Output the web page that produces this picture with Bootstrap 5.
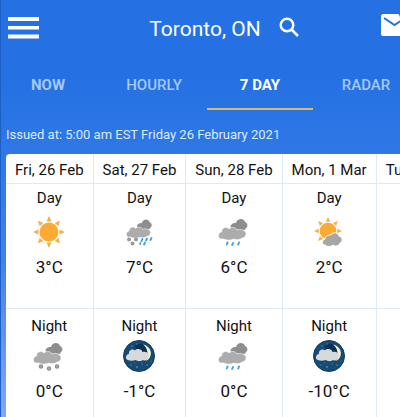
<!DOCTYPE html>
<html lang="en">
<head>
<meta charset="utf-8">
<meta name="viewport" content="width=device-width, initial-scale=1">
<title>Toronto, ON – 7 Day Forecast</title>
<link rel="stylesheet" href="https://cdn.jsdelivr.net/npm/bootstrap@5.3.0/dist/css/bootstrap.min.css">
<style>
body { font-family: Roboto, "Liberation Sans", sans-serif; color: #111; background: #2571e3; }
.app { border-left: 1px solid #1c60c4; background: linear-gradient(#2571e3 0, #2571e3 80px, #3078e6 160px, #4580e6 260px, #86a6ee 100%); }
.top-bar { height: 56px; padding: 0 0 0 7px; }
.icon-btn { line-height: 0; color: #fff; }
.city { font-size: 21px; line-height: 28px; padding-top: 2px; }
.place { padding-left: 31px; }
.tab-strip { margin-left: -6px; height: 54px; }
.tab-strip .nav-link { flex: 0 0 106px; padding: 17px 0 0; font-size: 15px; line-height: 24px; font-weight: 500; text-align: center; color: #a5c8f8; border-radius: 0; border-bottom: 2px solid transparent; }
.tab-strip .nav-link.heavy { font-weight: 700; }
.tab-strip .nav-link.active { color: #fff; font-weight: 700; border-bottom-color: #dcb964; }
.issued { font-size: 13px; line-height: 20px; padding: 15px 0 9px 5px; color: #dcebff; }
.sheet { margin-left: 5px; border-radius: 4px 0 0 0; }
.days { border-collapse: separate; border-spacing: 0; white-space: nowrap; text-align: center; font-size: 15px; line-height: 24px; }
.days th, .days td { border-right: 1px solid #dfeaf7; border-bottom: 1px solid #dfeaf7; vertical-align: top; }
.days th { font-weight: 400; padding: 4px 9px 1px; }
.days td { padding: 2px 8px 29px; }
.days .night td { padding: 5px 8px 30px; }
.days svg { display: block; margin: 6px auto 7px; }
.days .night svg { margin: 2px auto 7px; }
.temp { font-size: 17px; }
</style>
<script src="https://cdn.jsdelivr.net/npm/bootstrap@5.3.0/dist/js/bootstrap.bundle.min.js"></script>
</head>
<body>
<svg width="0" height="0" class="position-absolute" aria-hidden="true">
  <defs>
    <path id="puff" d="M3 23C-.5 22.500 -.5 16.500 3.500 16C3.500 12 8 10 11 13C14 10.500 18 11.500 19 14C23 12.500 28 14.500 28 17.500C28 20.500 26 22 24 22C22 24 18 24 16 23C13 24.500 8 24.500 6 23Z"/>
    <symbol id="clouds" viewBox="0 0 32 32">
      <path fill="#8e8e8e" d="M12.500 11C12.500 8 16 6.500 18 7C19 2 26 1.500 27 6C30 7 30 11 28 12C27 15 23 14.500 21 14C18 14 14 13 12.500 11Z"/>
      <use href="#puff" fill="#acacac" stroke="#fff" stroke-width=".6"/>
    </symbol>
    <symbol id="rain" viewBox="0 0 32 32">
      <use href="#clouds" width="32" height="32"/>
      <g stroke="#4da0e0" stroke-width="2" stroke-linecap="round"><path d="M9.500 26.500L8.700 28.500M15 27L14.200 29M21 26.500L20.200 28.500"/></g>
    </symbol>
    <symbol id="snow" viewBox="0 0 32 32">
      <use href="#clouds" width="32" height="32"/>
      <g fill="#aaa" stroke="#8e8e8e" stroke-width="1.300"><circle cx="8" cy="26.500" r="1.600"/><circle cx="16" cy="28.500" r="1.600"/><circle cx="24" cy="26.500" r="1.600"/></g>
    </symbol>
    <symbol id="mix" viewBox="0 0 32 32">
      <use href="#clouds" x="3" y="1" width="28" height="28"/>
      <g fill="#999"><circle cx="6" cy="23.500" r="2"/><circle cx="13" cy="23.500" r="2"/><circle cx="9.500" cy="27.500" r="2"/></g>
      <g stroke="#3f9bea" stroke-width="1.800" stroke-linecap="round"><path d="M19.500 23L18.500 25M24 22.500L23 24.500M28.500 22L27.500 24M17.500 27L17 28M22 26.500L21 28.500"/></g>
    </symbol>
    <symbol id="sun" viewBox="0 0 32 32">
      <g fill="#f4b04a">
        <g id="rays"><path id="ray" d="M16 0L18.500 5.500H13.500Z"/><use href="#ray" transform="rotate(45 16 16)"/></g>
        <use href="#rays" transform="rotate(90 16 16)"/><use href="#rays" transform="rotate(180 16 16)"/><use href="#rays" transform="rotate(270 16 16)"/>
      </g>
      <circle cx="16" cy="16" r="9.500" fill="#fbab33"/>
    </symbol>
    <symbol id="suncloud" viewBox="0 0 32 32">
      <use href="#sun" x="1" y="1" width="28" height="28"/>
      <path d="M12 29C8 29 9 23.500 12 23C12 19 17 19 18 19C20 15.500 25 16.500 26 20C30 21 30 26 27 27C26 30 22 31 20 29C18 31 14 31 12 29Z" fill="#a6a6a6" stroke="#fff" stroke-width="1"/>
    </symbol>
    <symbol id="moon" viewBox="0 0 32 32">
      <circle cx="16" cy="16" r="15.500" fill="#174b74" stroke="#123c62"/>
      <path d="M12 5.500C15 3 20 3.500 22 6C24 9 25 12 24 15L13 11Z" fill="#0c3050"/>
      <path d="M20 4.500C30 7 30 18 23 21C26 16 25 8 20 4.500Z" fill="#f5f1c8"/>
      <path d="M5 20C1.500 19 3 14 6 14C5 10 10 8 12 10.500C14 8 19 9 19.500 12C24 10.500 27 14 25 17C25 20 22 21.500 20 20C17 22 14 21 13 20C10 21 7 21 5 20Z" fill="#d8d9da"/>
      <g fill="#5588aa"><circle cx="9" cy="6" r=".7"/><circle cx="14" cy="4" r=".7"/><circle cx="8" cy="25" r=".7"/><circle cx="14" cy="27" r=".9"/><circle cx="19" cy="24" r=".7"/><circle cx="24" cy="25" r=".8"/><circle cx="12" cy="23" r=".6"/><circle cx="28" cy="21" r=".6"/></g>
    </symbol>
  </defs>
</svg>
<div class="app d-flex flex-column vh-100 overflow-hidden">
  <header class="top-bar d-flex flex-shrink-0 align-items-center justify-content-between">
    <button type="button" class="icon-btn btn p-0 border-0" aria-label="Menu"><svg width="31" height="22" viewBox="0 0 31 22" fill="currentColor"><path d="M0 0H31V4H0ZM0 9H31V12.500H0ZM0 17.500H31V21.500H0Z"/></svg></button>
    <div class="place d-flex align-items-center gap-3">
      <h1 class="city fw-normal text-white mb-0">Toronto, ON</h1>
      <button type="button" class="icon-btn btn p-0 border-0" aria-label="Search"><svg width="24" height="24" viewBox="0 0 24 24" fill="none" stroke="currentColor" stroke-width="2.500"><circle cx="10" cy="9" r="6.300"/><path d="M14.500 13.500L21 20"/></svg></button>
    </div>
    <button type="button" class="icon-btn btn p-0 border-0 overflow-hidden" aria-label="Messages"><svg width="20" height="32" viewBox="0 0 20 32"><path d="M3 2H28V24H3Q1 24 1 22V4Q1 2 3 2Z" fill="currentColor"/><path d="M4 6L14.500 13L25 6" fill="none" stroke="#2571e3" stroke-width="2"/></svg></button>
  </header>
  <nav class="tab-strip nav flex-nowrap flex-shrink-0" aria-label="Forecast views">
    <a class="nav-link heavy" href="#now">NOW</a>
    <a class="nav-link" href="#hourly">HOURLY</a>
    <a class="nav-link active" href="#week" aria-current="page">7 DAY</a>
    <a class="nav-link" href="#radar">RADAR</a>
  </nav>
  <p class="issued mb-0">Issued at: 5:00 am EST Friday 26 February 2021</p>
  <main class="sheet bg-white flex-grow-1 overflow-hidden" id="week">
    <table class="days">
      <thead><tr><th scope="col">Fri, 26 Feb</th><th scope="col">Sat, 27 Feb</th><th scope="col">Sun, 28 Feb</th><th scope="col">Mon, 1 Mar</th><th scope="col">Tue, 2 Mar</th></tr></thead>
      <tbody>
        <tr>
          <td>Day<svg width="32" height="32" role="img" aria-label="Sunny"><use href="#sun"/></svg><div class="temp">3°C</div></td>
          <td>Day<svg width="32" height="32" role="img" aria-label="Mixed snow and rain"><use href="#mix"/></svg><div class="temp">7°C</div></td>
          <td>Day<svg width="32" height="32" role="img" aria-label="Rain"><use href="#rain"/></svg><div class="temp">6°C</div></td>
          <td>Day<svg width="32" height="32" role="img" aria-label="Mainly sunny"><use href="#suncloud"/></svg><div class="temp">2°C</div></td>
          <td></td>
        </tr>
        <tr class="night">
          <td>Night<svg width="32" height="32" role="img" aria-label="Snow"><use href="#snow"/></svg><div class="temp">0°C</div></td>
          <td>Night<svg width="32" height="32" role="img" aria-label="Partly cloudy"><use href="#moon"/></svg><div class="temp">-1°C</div></td>
          <td>Night<svg width="32" height="32" role="img" aria-label="Rain"><use href="#rain"/></svg><div class="temp">0°C</div></td>
          <td>Night<svg width="32" height="32" role="img" aria-label="Partly cloudy"><use href="#moon"/></svg><div class="temp">-10°C</div></td>
          <td></td>
        </tr>
      </tbody>
    </table>
  </main>
</div>
</body>
</html>
